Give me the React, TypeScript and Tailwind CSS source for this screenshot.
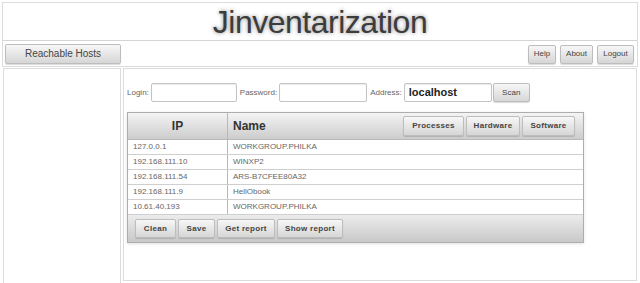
import React from 'react';

type Host = { ip: string; name: string };

const HOSTS: Host[] = [
  { ip: '127.0.0.1', name: 'WORKGROUP.PHILKA' },
  { ip: '192.168.111.10', name: 'WINXP2' },
  { ip: '192.168.111.54', name: 'ARS-B7CFEE80A32' },
  { ip: '192.168.111.9', name: 'HellObook' },
  { ip: '10.61.40.193', name: 'WORKGROUP.PHILKA' },
];

// gray gradient button used everywhere
const btn =
  'flex items-center justify-center rounded-[2px] border border-[#bdbdbd] bg-gradient-to-b from-[#f7f7f7] to-[#d6d6d6] text-[#444] shadow-[0_1px_1px_rgba(0,0,0,0.15)]';

function Field({ label, w, value }: { label: string; w: string; value?: string }) {
  return (
    <div className="flex items-center gap-[2px]">
      <span className="text-[8px] text-[#666]">{label}</span>
      <div
        className={`flex h-[19px] items-center rounded-[2px] border border-[#c4c4c4] bg-white px-[4px] shadow-[inset_0_1px_1px_rgba(0,0,0,0.08)] ${w}`}
      >
        {value && <span className="text-[11px] font-bold text-[#222]">{value}</span>}
      </div>
    </div>
  );
}

export default function App() {
  return (
    <div className="flex h-[283px] w-[640px] flex-col overflow-hidden bg-white font-['Liberation_Sans',Arial,sans-serif]">
      {/* Header + nav */}
      <div className="mx-[2px] mt-[2px] border border-[#dcdcdc]">
        <div className="flex h-[38px] items-center justify-center border-b border-[#d4d4d4]">
          <h1 className="text-[32px] leading-none tracking-[-0.5px] text-[#3c3c3c] [text-shadow:0_0_4px_rgba(0,0,0,0.45)]">
            Jinventarization
          </h1>
        </div>
        <div className="flex h-[25px] items-center justify-between pl-[2px] pr-[3px]">
          <div className={`${btn} h-[20px] w-[116px] text-[10px] text-[#333]`}>Reachable Hosts</div>
          <div className="flex items-center gap-[4px] pt-[1px]">
            <div className={`${btn} h-[19px] w-[28px] text-[8px]`}>Help</div>
            <div className={`${btn} h-[19px] w-[33px] text-[8px]`}>About</div>
            <div className={`${btn} h-[19px] w-[37px] text-[8px]`}>Logout</div>
          </div>
        </div>
      </div>

      {/* Body */}
      <div className="flex flex-1 gap-[2px] px-[3px] pt-[1px]">
        <div className="-mb-[4px] w-[118px] border border-[#dcdcdc]" />
        <div className="mb-[2px] flex-1 border border-[#dcdcdc] px-[3px] pt-[14px]">
          {/* login form */}
          <div className="flex items-center gap-[3px]">
            <Field label="Login:" w="w-[86px]" />
            <Field label="Password:" w="w-[88px]" />
            <Field label="Address:" w="w-[88px]" value="localhost" />
            <div className={`${btn} -ml-[2px] h-[19px] w-[37px] text-[8px]`}>Scan</div>
          </div>

          {/* table */}
          <div className="mt-[10px] w-[457px] border border-[#adadad] shadow-[0_1px_3px_rgba(0,0,0,0.12)]">
            <div className="flex h-[27px] border-b border-[#b8b8b8] bg-gradient-to-b from-[#f4f4f4] to-[#cdcdcd]">
              <div className="flex w-[100px] items-center justify-center border-r border-[#b8b8b8] text-[12px] font-bold text-[#333]">
                IP
              </div>
              <div className="flex flex-1 items-center justify-between pl-[5px] pr-[8px]">
                <span className="text-[12px] font-bold text-[#333]">Name</span>
                <div className="flex gap-[2px]">
                  <div className={`${btn} h-[20px] w-[61px] text-[8px] font-bold tracking-[0.3px]`}>Processes</div>
                  <div className={`${btn} h-[20px] w-[54px] text-[8px] font-bold tracking-[0.3px]`}>Hardware</div>
                  <div className={`${btn} h-[20px] w-[53px] text-[8px] font-bold tracking-[0.3px]`}>Software</div>
                </div>
              </div>
            </div>
            {HOSTS.map((h, i) => (
              <div key={i} className="flex h-[15px] border-b border-[#cfcfcf] bg-white text-[8px] text-[#666]">
                <div className="flex w-[100px] items-center border-r border-[#b8b8b8] pl-[5px]">{h.ip}</div>
                <div className="flex flex-1 items-center pl-[5px]">{h.name}</div>
              </div>
            ))}
            <div className="flex h-[27px] items-center gap-[2px] bg-gradient-to-b from-[#ececec] to-[#c9c9c9] pl-[7px]">
              <div className={`${btn} h-[19px] w-[41px] text-[8px] font-bold tracking-[0.3px]`}>Clean</div>
              <div className={`${btn} h-[19px] w-[37px] text-[8px] font-bold tracking-[0.3px]`}>Save</div>
              <div className={`${btn} h-[19px] w-[58px] text-[8px] font-bold tracking-[0.3px]`}>Get report</div>
              <div className={`${btn} h-[19px] w-[66px] text-[8px] font-bold tracking-[0.3px]`}>Show report</div>
            </div>
          </div>
        </div>
      </div>
    </div>
  );
}
